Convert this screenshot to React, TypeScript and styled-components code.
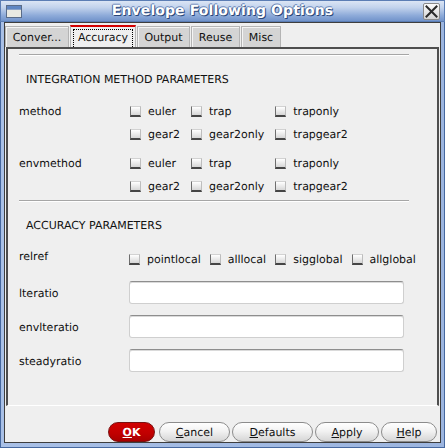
import React from 'react';
import styled, { createGlobalStyle } from 'styled-components';

const Global = createGlobalStyle`
  html, body { margin: 0; padding: 0; background: #ffffff; }
  body {
    font-family: "DejaVu Sans", Verdana, sans-serif;
    font-size: 11px;
    color: #111;
    text-rendering: geometricPrecision;
  }
  * { box-sizing: border-box; }
`;

const Window = styled.div`
  width: 445px;
  height: 448px;
  display: flex;
  flex-direction: column;
  background: linear-gradient(90deg, #a9c0e6, #9cb5df);
  box-shadow: inset 0 0 0 1px #46689f;
`;

const TitleBar = styled.div`
  height: 22px;
  flex: none;
  display: flex;
  align-items: center;
  padding: 0 5px 0 6px;
  background: linear-gradient(#dfe8f6 0%, #c1d2ec 35%, #8eabd9 70%, #6c8fc8 100%);
  box-shadow: inset 0 0 0 1px #5b7db4;
`;

const TitleText = styled.div`
  flex: 1;
  text-align: center;
  font-family: "DejaVu Sans", sans-serif;
  font-weight: bold;
  font-size: 14px;
  color: #ffffff;
  text-shadow: 1px 1px 0 #2a4678, -1px 0 0 #4a6aa0, 0 -1px 0 #6a88bb;
  letter-spacing: 0.1px;
`;

const CloseButton = styled.div`
  width: 17px;
  height: 17px;
  display: flex;
  align-items: center;
  justify-content: center;
  background: linear-gradient(#fbfbfb, #d4d4d4);
  border: 1px solid #8a8a8a;
  border-radius: 2px;
`;

const Body = styled.div`
  flex: 1;
  margin: 0 4px 5px 4px;
  border: 1px solid #3e3e3e;
  background: #efefef;
  display: flex;
  flex-direction: column;
`;

const TabRow = styled.div`
  display: flex;
  padding-top: 3px;
  height: 24px;
  flex: none;
`;

const Tab = styled.div<{ $w: number; $active?: boolean }>`
  width: ${p => p.$w}px;
  height: ${p => (p.$active ? 22 : 21)}px;
  margin-top: ${p => (p.$active ? -1 : 0)}px;
  margin-right: 1px;
  display: flex;
  align-items: stretch;
  justify-content: center;
  padding: ${p => (p.$active ? '2px 2px 0 2px' : '4px 0 0 0')};
  background: ${p => (p.$active ? '#efefef' : '#d4d4d4')};
  border: 1px solid #b4b4b4;
  border-bottom: none;
  border-top: ${p => (p.$active ? '2px solid #d40000' : '1px solid #b4b4b4')};
  box-shadow: ${p => (p.$active ? 'none' : 'inset 1px 1px 0 #f4f4f4')};
  font-size: 11px;
  line-height: 14px;
`;

const FocusLabel = styled.div`
  flex: 1;
  border: 1px dotted #000;
  border-bottom: none;
  display: flex;
  justify-content: center;
  padding-top: 1px;
`;

const Panel = styled.div`
  height: 359px;
  flex: none;
  margin: 0 1px;
  border-top: 2px solid #4e4e4e;
  border-left: 2px solid #4e4e4e;
  border-right: 2px solid #4e4e4e;
  border-bottom: 1px solid #ffffff;
  padding: 5px 0 0 11px;
  display: flex;
  flex-direction: column;
`;

const Separator = styled.div<{ $mt: number }>`
  width: 390px;
  height: 2px;
  margin-top: ${p => p.$mt}px;
  border-top: 1px solid #a6a6a6;
  border-bottom: 1px solid #ffffff;
  flex: none;
`;

const SectionTitle = styled.div`
  margin-top: 17px;
  padding-left: 7px;
  line-height: 14px;
  font-size: 11px;
`;

const Row = styled.div<{ $mt: number }>`
  display: flex;
  align-items: flex-start;
  margin-top: ${p => p.$mt}px;
`;

const Label = styled.div<{ $w: number; $lh?: number }>`
  width: ${p => p.$w}px;
  flex: none;
  line-height: ${p => p.$lh ?? 23}px;
`;

const OptionGrid = styled.div`
  display: grid;
  grid-template-columns: repeat(3, auto);
  grid-auto-rows: 23px;
  column-gap: 11px;
`;

const OptionFlow = styled.div`
  display: flex;
  height: 23px;
  gap: 9px;
`;

const Option = styled.label`
  display: flex;
  align-items: center;
  gap: 7px;
  white-space: nowrap;
`;

const Box = styled.span`
  width: 11px;
  height: 11px;
  flex: none;
  background: linear-gradient(#ffffff, #d6d6d6);
  border-top: 1px solid #d2d2d2;
  border-right: 1px solid #bdbdbd;
  border-left: 1px solid #6e6e6e;
  border-bottom: 2px solid #454545;
`;

const Field = styled.div`
  width: 275px;
  height: 23px;
  background: #ffffff;
  border: 1px solid #cfcfcf;
  border-top-color: #8e8e8e;
  border-radius: 3px;
  box-shadow: inset 0 1px 0 #dadada;
`;

const FieldRow = styled.div<{ $mt: number }>`
  display: flex;
  align-items: center;
  margin-top: ${p => p.$mt}px;
`;

const FieldLabel = styled.div`
  width: 110px;
  flex: none;
  padding-top: 2px;
`;

const ButtonBar = styled.div`
  flex: 1;
  display: flex;
  justify-content: flex-end;
  align-items: flex-start;
  gap: 2px;
  padding: 16px 3px 0 0;
`;

const Button = styled.div<{ $w: number; $primary?: boolean }>`
  width: ${p => p.$w}px;
  height: 20px;
  border-radius: 10px;
  display: flex;
  align-items: center;
  justify-content: center;
  font-size: 11px;
  padding-top: 1px;
  color: ${p => (p.$primary ? '#ffffff' : '#111111')};
  font-weight: ${p => (p.$primary ? 'bold' : 'normal')};
  background: ${p =>
    p.$primary
      ? 'linear-gradient(#d10000, #c00000 60%, #a80000)'
      : 'linear-gradient(#ffffff, #f2f2f2 45%, #d6d6d6)'};
  border: 1px solid ${p => (p.$primary ? '#7a1010' : '#8c8c8c')};
  margin-right: ${p => (p.$primary ? 2 : 0)}px;
`;

const TitleIcon = () => (
  <svg width="16" height="13" viewBox="0 0 16 13">
    <rect x="0.5" y="0.5" width="15" height="12" fill="#e9e9e2" stroke="#5a6c88" />
    <rect x="1" y="1" width="14" height="3" fill="#5f86c2" />
    <line x1="1" y1="4.5" x2="15" y2="4.5" stroke="#8aa2c8" />
  </svg>
);

const CloseIcon = () => (
  <svg width="13" height="13" viewBox="0 0 13 13">
    <path d="M1.5 1.5 L11.5 11.5 M11.5 1.5 L1.5 11.5" stroke="#2a2a2a" strokeWidth="2" strokeLinecap="square" />
  </svg>
);

const Check = ({ label }: { label: string }) => (
  <Option>
    <Box />
    <span>{label}</span>
  </Option>
);

const methods = ['euler', 'trap', 'traponly', 'gear2', 'gear2only', 'trapgear2'];

export default function App() {
  return (
    <>
      <Global />
      <Window>
        <TitleBar>
          <TitleIcon />
          <TitleText>Envelope Following Options</TitleText>
          <CloseButton>
            <CloseIcon />
          </CloseButton>
        </TitleBar>
        <Body>
          <TabRow>
            <Tab $w={64}>Conver...</Tab>
            <Tab $w={66} $active>
              <FocusLabel>Accuracy</FocusLabel>
            </Tab>
            <Tab $w={53}>Output</Tab>
            <Tab $w={49}>Reuse</Tab>
            <Tab $w={40}>Misc</Tab>
          </TabRow>
          <Panel>
            <Separator $mt={0} />
            <SectionTitle>INTEGRATION METHOD PARAMETERS</SectionTitle>
            <Row $mt={13}>
              <Label $w={111}>method</Label>
              <OptionGrid>
                {methods.map(m => (
                  <Check key={m} label={m} />
                ))}
              </OptionGrid>
            </Row>
            <Row $mt={6}>
              <Label $w={111}>envmethod</Label>
              <OptionGrid>
                {methods.map(m => (
                  <Check key={m} label={m} />
                ))}
              </OptionGrid>
            </Row>
            <Separator $mt={2} />
            <SectionTitle>ACCURACY PARAMETERS</SectionTitle>
            <Row $mt={15}>
              <Label $w={110} $lh={17}>relref</Label>
              <OptionFlow>
                {['pointlocal', 'alllocal', 'sigglobal', 'allglobal'].map(m => (
                  <Check key={m} label={m} />
                ))}
              </OptionFlow>
            </Row>
            <FieldRow $mt={10}>
              <FieldLabel>lteratio</FieldLabel>
              <Field />
            </FieldRow>
            <FieldRow $mt={11}>
              <FieldLabel>envlteratio</FieldLabel>
              <Field />
            </FieldRow>
            <FieldRow $mt={11}>
              <FieldLabel>steadyratio</FieldLabel>
              <Field />
            </FieldRow>
          </Panel>
          <ButtonBar>
            <Button $w={47} $primary>
              <span><u>O</u>K</span>
            </Button>
            <Button $w={71}>
              <span><u>C</u>ancel</span>
            </Button>
            <Button $w={81}>
              <span><u>D</u>efaults</span>
            </Button>
            <Button $w={64}>
              <span><u>A</u>pply</span>
            </Button>
            <Button $w={56}>
              <span><u>H</u>elp</span>
            </Button>
          </ButtonBar>
        </Body>
      </Window>
    </>
  );
}
